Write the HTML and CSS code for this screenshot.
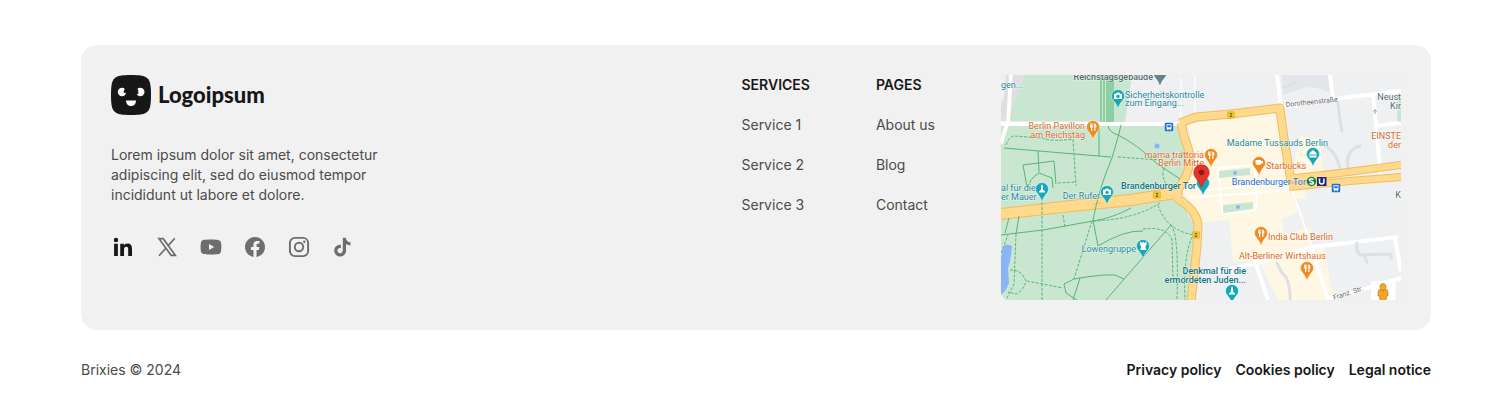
FILE: index.html
```
<!DOCTYPE html>
<html lang="en">
<head>
<meta charset="utf-8">
<meta name="viewport" content="width=device-width, initial-scale=1">
<title>Logoipsum</title>
<link rel="stylesheet" href="styles.css">
</head>
<body>
<footer class="footer">
  <div class="card">
    <div class="brand">
      <a class="logo" href="#">
        <svg class="logo-mark" viewBox="0 0 40 40" aria-hidden="true">
          <path fill="#171717" d="M0 20C0 2.500 2.500 0 20 0s20 2.500 20 20-2.500 20-20 20S0 37.500 0 20z"/>
          <circle cx="11" cy="17" r="4.200" fill="#fff"/>
          <circle cx="29.300" cy="17" r="4.200" fill="#fff"/>
          <path fill="#171717" d="M12.500 16.900l1.500-3.900 2.500 3-1 1.800-2.300.3zM24 14.500l2.500-.5 1 1.500-.7 1.200 1 1.300-1.500 1.200-2.300-1z"/>
          <path fill="#fff" d="M15 25.500h10c0 3.300-2 5.500-5 5.500s-5-2.200-5-5.500z"/>
        </svg>
        <span class="logo-name">Logoipsum</span>
      </a>
      <p class="about">Lorem ipsum dolor sit amet, consectetur adipiscing elit, sed do eiusmod tempor incididunt ut labore et dolore.</p>
      <ul class="social">
        <li><a class="social-link active" href="#" aria-label="LinkedIn"><svg viewBox="0 0 24 24"><circle cx="4.983" cy="5.009" r="2.188"/><path d="M9.237 8.855v12.139h3.769v-6.003c0-1.584.298-3.118 2.262-3.118 1.937 0 1.961 1.811 1.961 3.218v5.904H21v-6.657c0-3.270-.704-5.783-4.526-5.783-1.835 0-3.065 1.007-3.568 1.960h-.051v-1.660H9.237zm-6.142 0H6.870v12.139H3.095z"/></svg></a></li>
        <li><a class="social-link" href="#" aria-label="X"><svg viewBox="0 0 24 24" fill="none" stroke="currentColor" stroke-width="1.700"><path d="M4 3.700h4.200L20.300 20.300h-4.200zM19.800 3.200l-6.600 7.400M4 20.800l6.800-7.600"/></svg></a></li>
        <li><a class="social-link" href="#" aria-label="YouTube"><svg viewBox="0 0 24 24"><path d="M21.900 7.203a2.506 2.506 0 0 0-2.069-2.066C18.265 4.707 12 4.600 12 4.600s-6.264.093-7.831.504a2.560 2.560 0 0 0-2.066 2.078c-.513 1.566-.517 4.814-.517 4.814s-.004 3.264.506 4.814c.23.857.905 1.834 2.063 2.065 1.582.43 7.830.537 7.830.537s6.265-.093 7.831-.503a2.515 2.515 0 0 0 2.067-2.063c.414-1.565.517-4.812.517-4.812s.02-3.265-.5-4.831zM9.996 15.005l.005-6 5.207 3.005z"/></svg></a></li>
        <li><a class="social-link" href="#" aria-label="Facebook"><svg viewBox="0 0 24 24"><path d="M12.001 2.002c-5.522 0-9.999 4.477-9.999 9.999 0 4.990 3.656 9.126 8.437 9.879v-6.988h-2.540v-2.891h2.540V9.798c0-2.508 1.493-3.891 3.776-3.891 1.094 0 2.240.195 2.240.195v2.459h-1.264c-1.240 0-1.628.772-1.628 1.563v1.875h2.771l-.443 2.891h-2.328v6.988C18.344 21.129 22 16.992 22 12.001c0-5.522-4.477-9.999-9.999-9.999z"/></svg></a></li>
        <li><a class="social-link" href="#" aria-label="Instagram"><svg viewBox="0 0 24 24" fill="none" stroke="currentColor" stroke-width="1.900"><rect x="2.900" y="2.900" width="18.200" height="18.200" rx="5"/><circle cx="12" cy="12" r="4.200"/><circle cx="17.300" cy="6.700" r="1.200" fill="currentColor" stroke="none"/></svg></a></li>
        <li><a class="social-link" href="#" aria-label="TikTok"><svg viewBox="0 0 24 24"><path transform="translate(.3 1) scale(.93)" d="M19.590 6.690a4.830 4.830 0 0 1-3.770-4.250V2h-3.450v13.670a2.890 2.890 0 0 1-5.200 1.740 2.890 2.890 0 0 1 2.310-4.640 2.930 2.930 0 0 1 .88.13V9.400a6.840 6.840 0 0 0-1-.05A6.330 6.330 0 0 0 5 20.100a6.340 6.340 0 0 0 10.860-4.430v-7a8.160 8.160 0 0 0 4.770 1.520v-3.400a4.850 4.850 0 0 1-1-.1z"/></svg></a></li>
      </ul>
    </div>
    <nav class="column" aria-labelledby="services-title">
      <h2 id="services-title">SERVICES</h2>
      <ul>
        <li><a href="#">Service 1</a></li>
        <li><a href="#">Service 2</a></li>
        <li><a href="#">Service 3</a></li>
      </ul>
    </nav>
    <nav class="column" aria-labelledby="pages-title">
      <h2 id="pages-title">PAGES</h2>
      <ul>
        <li><a href="#">About us</a></li>
        <li><a href="#">Blog</a></li>
        <li><a href="#">Contact</a></li>
      </ul>
    </nav>
    <svg class="map" viewBox="1001 75 400 225" role="img" aria-label="Map of Brandenburger Tor, Berlin">
      <defs>
        <path id="pin" d="M0-6.500a6.500 6.500 0 0 0-6.500 6.500C-6.500 4-2.500 5.500-.4 11.500q.4 1 .8 0C2.500 5.500 6.500 4 6.500 0A6.500 6.500 0 0 0 0-6.500z"/>
        <path id="fork" d="M-3-3.500v3q0 1 1 1.200V4h1.200V.7q1-.2 1-1.200v-3h-.7v2.700h-.5v-2.700h-.8v2.700h-.4v-2.700zM1.200-3.500V4h1.200V.5h.9v-2.500q0-1.300-2.100-1.500z"/>
        <path id="camera" d="M-4-2.300h2l.8-1.200h2.400l.8 1.200h2v5.300h-8zM0-1.300a1.700 1.700 0 1 0 .01 0z" fill-rule="evenodd"/>
        <path id="monument" d="M0-4.500l1 1.500V1h1v1h1v1.500h-6V2h1V1h1v-4z"/>
        <g id="bus"><rect x="-4.200" y="-4.200" width="8.400" height="8.400" rx="1.200" fill="#1b6ad6"/><path fill="#fff" d="M-2.500-2.800h5v5h-.7v1h-1v-1h-1.600v1h-1v-1h-.7z"/><path fill="#1b6ad6" d="M-1.700-1.800h3.400V.3h-3.400z"/></g>
        <g id="route"><rect x="-3.500" y="-3.200" width="7" height="6.400" rx=".5" fill="#f4c62f" stroke="#d9a51f" stroke-width=".5"/><path d="M-1.200-1.500h2.200L-1 1.500h2.400" fill="none" stroke="#5b522d" stroke-width=".8"/></g>
      </defs>
      <path fill="#eef0f2" d="M1001 75h400v225h-400z"/>
      <path fill="#dedfe1" d="M1001 75h25l-14 46h-11z"/>
      <path fill="#eef0f2" d="M1001 75h5l-2 22-3 8z"/>
      <path fill="#e3e5ea" d="M1282 75h48l2 18-16-5-10-1-23 8z"/>
      <path fill="#c8e6d0" d="M1025 75h107l-7 47-116-1 3-10zM1001 125h178l10 28-4 25-5 12 8 25 8 10v20l-6 55h-189z"/>
      <path fill="#fef7e3" d="M1188 124l91-11 9 71 16 2 2 12-11 2 3 13-15 5v17l28-8v20l13 1 10 52h-56l-17-35-28-5-4-40-27 2-12-20-8-12 12-36z"/>
      <path fill="#fef7e3" d="M1300 136l20 4 3 32-31 4z"/>
      <g fill="none" stroke="#fff" stroke-width="4">
        <path d="M1011 75l-3 47q-4 10-7 22M1001 124h183" stroke-width="3.800"/>
        <path d="M1277 75l4 33M1282 107l60-9 59-7M1330 75l3 24M1373 95l8 83M1375 126l26-3M1217 272l48-11 47-14 86-10M1311 247l17 53M1395 238l6 34M1328 300l73-22M1256 264l12 36"/>
        <path d="M1292 190l20 57" stroke-width="2"/>
        <path d="M1190 197l24-1 77-6M1205 191l10-2 75-6M1218 171q0-3 3-3l30-3q4 0 4 4l2 35q0 6-4 6l-27 4q-4 0-4-5z" stroke-width="2"/>
        <path d="M1181 78v42M1195 75v42" stroke-width="1.200"/>
      </g>
      <g fill="none" stroke="#dcdfe3" stroke-width="3" stroke-linecap="round">
        <path d="M1338 103q1 14 4 28M1325 146q11 5 15 23M1348 168q-3-18 12-22M1357 243q-1 11 4 12l28-1q3 0 2 4M1364 255l3 7M1277 263q4 10 9 14 5 12 4 25"/>
        <path d="M1283 87q5 0 12-4" stroke-width="2"/>
      </g>
      <g fill="none" stroke-linejoin="round">
        <path stroke="#f3bb5c" stroke-width="12" d="M1001 214l70-8 60-6 50-8"/>
        <path stroke="#f3bb5c" stroke-width="9" d="M1180 123l16-6 35-3 49-6q3 27 11 73M1181 123q2 12 8 28 2 14-3 25l-8 14v9q18 11 20 25l-1 22-6 56"/>
        <path stroke="#f3bb5c" stroke-width="8" d="M1287 179l53-6 61-8M1289 187l61-6 51-4"/>
        <path stroke="#ffd98c" stroke-width="10" d="M1001 214l70-8 60-6 50-8"/>
        <path stroke="#ffd98c" stroke-width="7" d="M1180 123l16-6 35-3 49-6q3 27 11 73M1181 123q2 12 8 28 2 14-3 25l-8 14v9q18 11 20 25l-1 22-6 56"/>
        <path stroke="#ffd98c" stroke-width="6" d="M1287 179l53-6 61-8M1289 187l61-6 51-4"/>
        <path stroke="#f3a84c" stroke-width=".7" d="M1093 204l8-1"/>
      </g>
      <g fill="none" stroke="#57b574" stroke-width="1">
        <path d="M1101 75v47M1104 75v47M1107 75v47M1109 75v47M1111 75v47M1113 75v47M1099 125v31M1004 148l35 3 72 6M1038 151l1 21M1027 187l-4-22 31-4 2 23M1028 188q1-9 11-15l13 5 1 10M1121 125l-3 12-6 21q-13 30-19 62M1108 126q1 6 10 9 20 10 38 28l24 16M1001 235l42-5 50-9q20-3 38-13M1009 218l-4 15M1019 216l-3 18M1093 220l5 26q26-16 45-15M1074 279q28-5 41-4l9 4M1171 225l-65 75M1074 279l-10 5 2 9 14 9M1080 278l-7 22"/>
        <g stroke-dasharray="3 1.500">
          <path d="M1006 145q3-8 8-9l27 2q12 4 32 1l3 47M1042 189v111M1058 183l18-1M1118 157l42 3M1001 253l7-18M1063 215l2 12M1092 221l-18 58M1016 234l-2 50-8 16M1010 270q11-1 16 11-2 9-10 13l-8-2M1027 281l36 7M1166 184q-8-14 5-24l12-8M1093 221q40-1 67-18M1158 205q8 25 36 30M1171 225q8 8 6 75M1143 229q24-3 29 11l1 40M1192 237q-9 20-7 63"/>
        </g>
      </g>
      <path fill="#8ab4f8" d="M1003 247q2-4 9-1-1 14-4 22l1 15q-3 8-8 12v-37z"/>
      <path fill="#c8e6d0" d="M1219 171l31-3v7l-31 3zM1223 205l30-3v7l-30 4zM1398 95h3v27l-4-1z"/>
      <g fill="#8ab4f8"><circle cx="1157" cy="146" r="2.500"/><circle cx="1235" cy="173" r="2"/><circle cx="1238" cy="207" r="2"/></g>
      <path fill="none" stroke="#9a9da3" d="M1375 114v-4m-1.500 1.500l1.500-2 1.500 2"/>
      <use href="#route" x="1231" y="115"/><use href="#route" x="1157" y="195"/><use href="#route" x="1196" y="235"/>
      <use href="#bus" x="1169" y="127"/><use href="#bus" x="1336" y="188"/>
      <g class="map-label">
        <g fill="#24889a">
          <text x="1001" y="88">gen...</text>
          <text x="1125" y="98">Sicherheitskontrolle</text><text x="1125" y="106">zum Eingang...</text>
          <text x="1328" y="146" text-anchor="end">Madame Tussauds Berlin</text>
          <text x="1001" y="191">al für die</text><text x="1001" y="200">er Mauer</text>
          <text x="1100" y="199" text-anchor="end">Der Rufer</text>
          <text x="1136" y="252" text-anchor="end">Löwengruppe</text>
        </g>
        <g fill="#0b7285" class="strong">
          <text x="1196" y="189" text-anchor="end">Brandenburger Tor</text>
          <text x="1246" y="274" text-anchor="end">Denkmal für die</text><text x="1246" y="283" text-anchor="end">ermordeten Juden...</text>
        </g>
        <g fill="#d8692b">
          <text x="1085" y="129" text-anchor="end">Berlin Pavillon</text><text x="1085" y="138" text-anchor="end">am Reichstag</text>
          <text x="1204" y="158" text-anchor="end">mama trattoria</text><text x="1204" y="166" text-anchor="end">Berlin Mitte</text>
          <text x="1266" y="169">Starbucks</text>
          <text x="1268" y="240">India Club Berlin</text>
          <text x="1239" y="259">Alt-Berliner Wirtshaus</text>
          <text x="1401" y="139" text-anchor="end">EINSTE</text><text x="1401" y="148" text-anchor="end">der</text>
        </g>
        <text x="1306" y="185" fill="#1a6ad0" text-anchor="end">Brandenburger Tor</text>
        <g fill="#566b73">
          <text x="1153" y="80" text-anchor="end" class="strong">Reichstagsgebäude</text>
          <text x="1401" y="100" text-anchor="end">Neust</text><text x="1401" y="109" text-anchor="end">Kir</text>
          <text x="1401" y="198" text-anchor="end">K</text>
        </g>
        <text class="street" fill="#5f6368" transform="translate(1286 107) rotate(-6)">Dorotheenstraße</text>
        <text class="street" fill="#5f6368" transform="translate(1334 300) rotate(-18)">Franz. Str.</text>
      </g>
      <g fill="#17a7bb" stroke="#fff" stroke-width=".5">
        <use href="#pin" x="1118" y="96"/><use href="#pin" x="1042" y="189"/><use href="#pin" x="1107" y="192"/><use href="#pin" x="1143" y="246"/><use href="#pin" x="1313" y="154"/><use href="#pin" x="1232" y="291"/><use href="#pin" x="1203" y="183"/>
      </g>
      <g fill="#ef8b20" stroke="#fff" stroke-width=".5">
        <use href="#pin" x="1093" y="127"/><use href="#pin" x="1211" y="155"/><use href="#pin" x="1259" y="163"/><use href="#pin" x="1261" y="233"/><use href="#pin" x="1307" y="268"/>
      </g>
      <use href="#pin" x="1160" y="73" fill="#69808d"/>
      <g fill="#fff">
        <use href="#fork" x="1093" y="127"/><use href="#fork" x="1211" y="155"/><use href="#fork" x="1261" y="233"/><use href="#fork" x="1307" y="268"/>
        <use href="#camera" x="1118" y="96"/><use href="#camera" x="1107" y="192"/>
        <use href="#monument" x="1042" y="189"/><use href="#monument" x="1232" y="291"/>
        <path d="M1140 242h1.500v1h1v-1h1.500v1h1v-1h1.500v3l-1 1v2l1 2h-6.500l1-2v-2l-1-1zM1309.500 153l3.500-3 3.500 3v4.500h-7zM1255.500 160h5.500v1h2v2.500h-2q-.5 1.500-2 1.500h-1.500q-2 0-2-2z"/>
      </g>
      <path fill="#17a7bb" d="M1310.500 154h1v2h-1zm2 0h1v2h-1zm2 0h1v2h-1z"/>
      <path fill="#e3342c" stroke="#b7261f" stroke-width=".5" d="M1201.500 164.500a7.800 7.800 0 0 0-7.800 7.800c0 5.500 5 7.700 7.200 14.200q.6 1.500 1.200 0c2.200-6.500 7.200-8.700 7.200-14.200a7.800 7.800 0 0 0-7.800-7.800z"/>
      <circle cx="1201.500" cy="172.300" r="2.800" fill="#8e1912"/>
      <circle cx="1311.500" cy="181.500" r="4.700" fill="#168244"/>
      <path fill="none" stroke="#fff" stroke-width="1.500" d="M1313.500 179.500q-4-1.500-4 .5 0 1 2 1.500t2 1.700q0 1.500-4 .3"/>
      <rect x="1317" y="177" width="9.500" height="9" fill="#1a2b7c"/>
      <path fill="none" stroke="#fff" stroke-width="1.500" d="M1319.500 178.500v3.500q0 2 2.200 2t2.200-2v-3.500"/>
      <rect x="1371" y="281" width="24.500" height="20" rx="1.500" fill="#fff"/>
      <path fill="#f5a623" stroke="#a9762a" stroke-width=".6" d="M1383 283.500a3 3 0 0 1 2 5.300q3 .5 3 3.200v4h-1.500l-.5 5h-6l-.5-5h-1.500v-4q0-2.700 3-3.200a3 3 0 0 1 2-5.300z"/>
      <path fill="#e47b1a" d="M1381 289.500h4l-2 2.500z"/>
    </svg>
  </div>
  <div class="bottom">
    <p>Brixies © 2024</p>
    <nav class="legal" aria-label="Legal">
      <a href="#">Privacy policy</a>
      <a href="#">Cookies policy</a>
      <a href="#">Legal notice</a>
    </nav>
  </div>
</footer>
</body>
</html>
```
FILE: styles.css
```
* { box-sizing: border-box; }

body {
  margin: 0;
  background: #fff;
  color: #4b4b4b;
  font: 400 14px/20px Inter, "Liberation Sans", sans-serif;
}

h2, p, ul { margin: 0; padding: 0; }
ul { list-style: none; }
a { color: inherit; text-decoration: none; }
svg { display: block; }

.footer {
  max-width: 1350px;
  margin: 0 auto;
  padding: 45px 0 30px;
}

.card {
  display: flex;
  align-items: flex-start;
  gap: 66px;
  padding: 30px;
  border-radius: 16px;
  background: #f1f1f1;
}

.brand {
  flex: 1;
  display: flex;
  flex-direction: column;
  align-items: flex-start;
  gap: 30px;
}

.logo {
  display: flex;
  align-items: center;
  gap: 7px;
  color: #171717;
}

.logo-mark { width: 40px; height: 40px; }

.logo-name {
  font-family: Lato, Inter, sans-serif;
  font-size: 22px;
  font-weight: 900;
}

.about { max-width: 270px; }

.social { display: flex; gap: 20px; }
.social-link { color: #6d6d6d; }
.social-link.active { color: #171717; }
.social-link svg { width: 24px; height: 24px; }
.social-link svg:not([fill]) { fill: currentColor; }

.column, .column ul {
  display: flex;
  flex-direction: column;
  gap: 20px;
}

.column h2 {
  color: #171717;
  font-size: 14px;
  font-weight: 600;
  line-height: 20px;
}

.column a { display: block; }

.map {
  flex: 0 1 400px;
  min-width: 200px;
  aspect-ratio: 16 / 9;
  border-radius: 0 0 0 8px;
}

.map-label {
  font: 400 9px Roboto, sans-serif;
  stroke: #fff;
  stroke-opacity: .7;
  stroke-width: 1px;
  stroke-linejoin: round;
  paint-order: stroke;
}

.map-label .strong { font-weight: 500; }
.map-label .street { font-size: 7px; }

.bottom {
  display: flex;
  justify-content: space-between;
  margin-top: 30px;
}

.legal {
  display: flex;
  gap: 14px;
  color: #171717;
  font-weight: 600;
}
```
